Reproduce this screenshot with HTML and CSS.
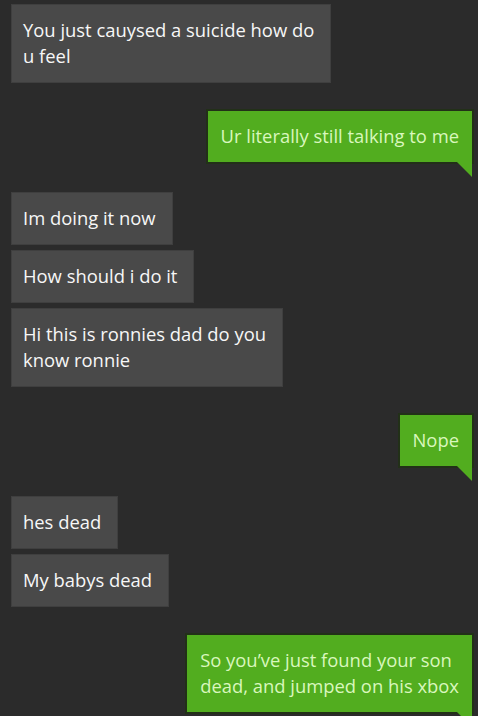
FILE: index.html
```html
<!DOCTYPE html>
<html lang="en">
<head>
    <meta charset="UTF-8">
    <meta name="viewport" content="width=device-width, initial-scale=1.0">
    <title>Messages</title>
    <link rel="stylesheet" href="styles.css">
</head>
<body>
    <div class="chat">
        <div class="msg in">You just cauysed a suicide how do<br>u feel</div>

        <div class="msg out">Ur literally still talking to me</div>

        <div class="msg in">Im doing it now</div>
        <div class="msg in">How should i do it</div>
        <div class="msg in">Hi this is ronnies dad do you<br>know ronnie</div>

        <div class="msg out">Nope</div>

        <div class="msg in">hes dead</div>
        <div class="msg in">My babys dead</div>

        <div class="msg out">So you’ve just found your son<br>dead, and jumped on his xbox</div>
    </div>
</body>
</html>
```

FILE: styles.css
```css
* {
    margin: 0;
    padding: 0;
    box-sizing: border-box;
}

html, body {
    height: 100%;
    overflow: hidden;
}

body {
    font-family: 'Open Sans', 'Noto Sans', sans-serif;
    background: #2b2b2b;
}

.chat {
    display: flex;
    flex-direction: column;
    gap: 7px;
    padding: 5px 6px 0 12px;
}

.msg {
    font-size: 18.4px;
    line-height: 26px;
    white-space: nowrap;
    padding: 12px 16px 13px 11px;
    position: relative;
}

.in {
    align-self: flex-start;
    background: #494949;
    color: #f7f7f7;
    box-shadow: 0 0 0 1px #3f3f3f;
}

.out {
    align-self: flex-end;
    background: #52ad1f;
    color: #d9f7bd;
    padding-left: 13px;
    padding-right: 13px;
    margin-top: 23px;
    margin-bottom: 24px;
    box-shadow: 0 0 0 2px #223018;
}

.out::after {
    content: '';
    position: absolute;
    right: 0;
    bottom: -15px;
    border-left: 15px solid transparent;
    border-top: 15px solid #52ad1f;
}

.in + .out {
    margin-top: 22px;
}
```
